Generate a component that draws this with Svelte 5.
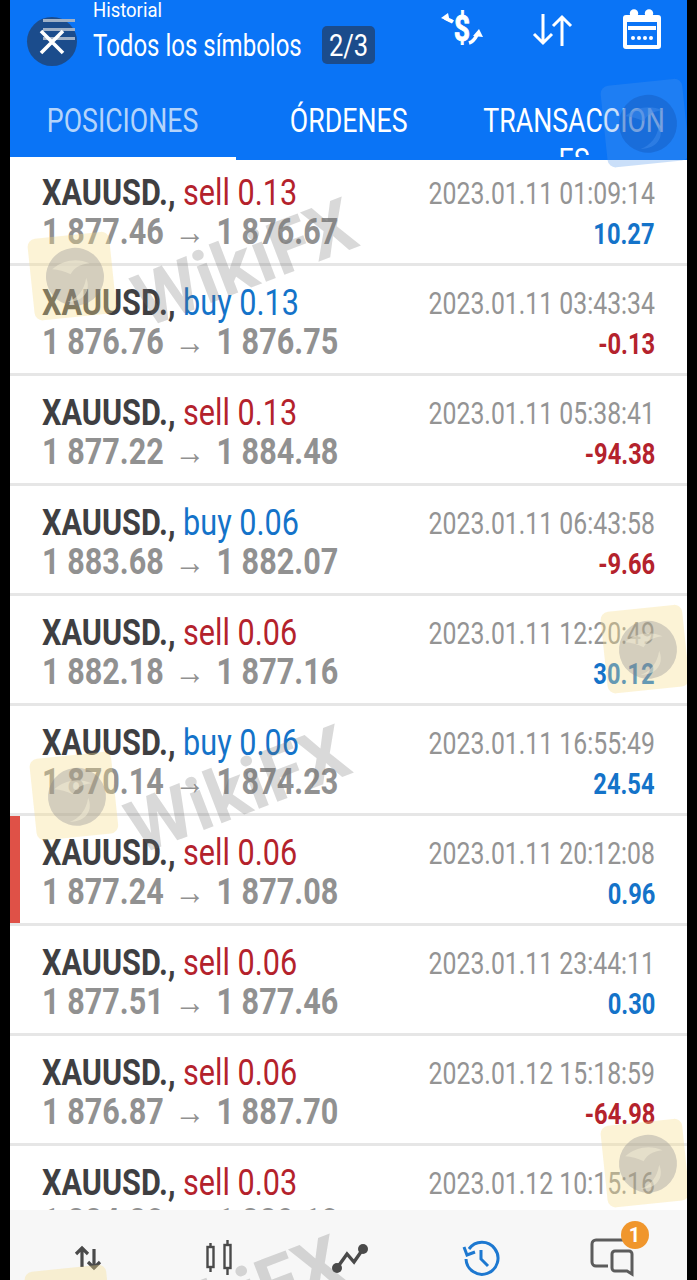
<script>
  const rows = [
    { side: "sell", lot: "0.13", open: "1 877.46", close: "1 876.67", time: "2023.01.11 01:09:14", profit: "10.27" },
    { side: "buy", lot: "0.13", open: "1 876.76", close: "1 876.75", time: "2023.01.11 03:43:34", profit: "-0.13" },
    { side: "sell", lot: "0.13", open: "1 877.22", close: "1 884.48", time: "2023.01.11 05:38:41", profit: "-94.38" },
    { side: "buy", lot: "0.06", open: "1 883.68", close: "1 882.07", time: "2023.01.11 06:43:58", profit: "-9.66" },
    { side: "sell", lot: "0.06", open: "1 882.18", close: "1 877.16", time: "2023.01.11 12:20:49", profit: "30.12" },
    { side: "buy", lot: "0.06", open: "1 870.14", close: "1 874.23", time: "2023.01.11 16:55:49", profit: "24.54" },
    { side: "sell", lot: "0.06", open: "1 877.24", close: "1 877.08", time: "2023.01.11 20:12:08", profit: "0.96", marked: true },
    { side: "sell", lot: "0.06", open: "1 877.51", close: "1 877.46", time: "2023.01.11 23:44:11", profit: "0.30" },
    { side: "sell", lot: "0.06", open: "1 876.87", close: "1 887.70", time: "2023.01.12 15:18:59", profit: "-64.98" },
    { side: "sell", lot: "0.03", open: "1 884.80", close: "1 889.10", time: "2023.01.12 10:15:16", profit: "7.16" }
  ];
  const logos = [
    { x: 31, y: 235 }, { x: 604, y: 82, blue: true }, { x: 604, y: 608 },
    { x: 33, y: 755 }, { x: 604, y: 1122 }, { x: 28, y: 1268 }
  ];
  const marks = [{ x: 146, y: 328 }, { x: 139, y: 855 }, { x: 134, y: 1365 }];
</script>

<div class="screen">
  <header class="top">
    <div class="toolbar">
      <button class="close" type="button" aria-label="Cerrar">
        <span class="lines"></span>
        <svg width="28" height="28" viewBox="0 0 28 28"><path d="M3 3 25 25M25 3 3 25" stroke="#fff" stroke-width="3.6" fill="none"/></svg>
      </button>
      <div class="titles">
        <span class="sub">Historial</span>
        <div class="title-row">
          <span class="title">Todos los símbolos</span>
          <span class="badge"><span>2/3</span></span>
        </div>
      </div>
      <div class="actions">
        <svg width="44" height="40" viewBox="0 0 44 40" fill="none" stroke="#fff">
          <text transform="translate(22 31) scale(.95 1.25)" text-anchor="middle" fill="#fff" stroke="#fff" stroke-width=".7" font-family="Roboto" font-weight="700" font-size="30">$</text>
          <path d="M13 12C10 10 8 10 5 8" stroke-width="3.6"/>
          <path d="M1 8l7-5 2 9z" fill="#fff" stroke="none"/>
          <path d="M29 33c3-1 6-4 8-8" stroke-width="3.6"/>
          <path d="M43 27l-4-8-6 7z" fill="#fff" stroke="none"/>
        </svg>
        <svg width="44" height="36" viewBox="-1 0 44 36" fill="none" stroke="#fff" stroke-width="3">
          <path d="M12 2v29M3 22l9 9 9-9"/>
          <path d="M31 34V5M22 14l9-9 9 9"/>
        </svg>
        <svg width="44" height="42" viewBox="-1 0 44 42">
          <path fill-rule="evenodd" fill="#fff" d="M5 6h32a3 3 0 0 1 3 3v28a3 3 0 0 1-3 3H5a3 3 0 0 1-3-3V9a3 3 0 0 1 3-3zM6 13v23h30V13z"/>
          <circle cx="13" cy="4.500" r="4.200" fill="#fff"/><circle cx="28" cy="4.500" r="4.200" fill="#fff"/>
          <rect x="7" y="17" width="28" height="4" fill="#fff"/>
          <g fill="#fff"><circle cx="12" cy="29" r="2"/><circle cx="18" cy="29" r="2"/><circle cx="24" cy="29" r="2"/><circle cx="30" cy="29" r="2"/></g>
        </svg>
      </div>
    </div>
    <nav class="tabs">
      <div class="tab active"><span>POSICIONES</span></div>
      <div class="tab"><span>ÓRDENES</span></div>
      <div class="tab"><span>TRANSACCION<br />ES</span></div>
    </nav>
  </header>

  <main class="list">
    {#each rows as row}
      <div class="row" class:marked={row.marked}>
        <div class="line">
          <span class="deal"><b>XAUUSD.,</b> <span class={row.side}>{row.side} {row.lot}</span></span>
          <span class="time">{row.time}</span>
        </div>
        <div class="line">
          <span class="prices">{row.open} <i>→</i> {row.close}</span>
          <span class="profit" class:loss={row.profit.startsWith("-")}>{row.profit}</span>
        </div>
      </div>
    {/each}
  </main>

  <footer class="bar">
    <div class="slot">
      <svg width="30" height="28" viewBox="0 0 30 28" fill="none" stroke="#4a4a4a" stroke-width="3.2">
        <path d="M9 23V3M3 10l6-6 6 6"/><path d="M21 5v20M15 18l6 6 6-6"/>
      </svg>
    </div>
    <div class="slot">
      <svg width="30" height="36" viewBox="0 0 30 36" fill="none" stroke="#4a4a4a" stroke-width="2.4">
        <rect x="3.500" y="7" width="6" height="20"/><path d="M6.500 3v4M6.500 27v5"/>
        <rect x="20.500" y="5" width="6" height="23"/><path d="M23.500 0v5M23.500 28v7"/>
      </svg>
    </div>
    <div class="slot">
      <svg width="38" height="32" viewBox="0 0 38 32" fill="none" stroke="#4a4a4a" stroke-width="3.4">
        <path d="M6 26 16 12l7 8L32 7"/>
        <g fill="#4a4a4a" stroke="none"><circle cx="6" cy="26" r="5"/><circle cx="32" cy="7" r="5"/></g>
      </svg>
    </div>
    <div class="slot">
      <svg width="40" height="40" viewBox="0 0 40 40" fill="none" stroke="#1d78d0" stroke-width="3">
        <path d="M8 11A16 16 0 1 1 5 21"/><path d="M3 9l3 8 8-3" /><path d="M20 12v9l7 7"/>
      </svg>
    </div>
    <div class="slot">
      <div class="chat">
        <svg width="44" height="40" viewBox="0 0 44 40" fill="none" stroke="#5c5c5c" stroke-width="3">
          <path d="M33 2H6a4 4 0 0 0-4 4v18a4 4 0 0 0 4 4h12"/>
          <path d="M25 13h14a3 3 0 0 1 3 3v20l-5-3H25a3 3 0 0 1-3-3V16a3 3 0 0 1 3-3z"/>
        </svg>
        <span class="count">1</span>
      </div>
    </div>
  </footer>

  <div class="marks" aria-hidden="true">
    <svg width="697" height="1280" viewBox="0 0 697 1280">
      {#each logos as l}
        <g transform="translate({l.x} {l.y}) rotate(-6 42 42)">
          <rect width="82" height="82" rx="8" fill={l.blue ? "#4f94ea" : "#f7dd8e"} opacity={l.blue ? 0.3 : 0.36} />
          <circle cx="44" cy="42" r="29" fill={l.blue ? "#1559bd" : "#80808a"} opacity={l.blue ? 0.45 : 0.32} />
          <path d="M22 32c12-8 26-9 38-2-10 0-16 3-20 9-6-4-12-6-18-7zM34 66c10-2 18-10 21-22 4 12-4 24-21 22z" fill={l.blue ? "#3f8cec" : "#f6efd8"} opacity="0.5" />
        </g>
      {/each}
      {#each marks as m}
        <text class="wiki" x={m.x} y={m.y} transform="rotate(-21 {m.x} {m.y})">WikiFX</text>
      {/each}
    </svg>
  </div>
</div>

<style>
  :global(body) {
    background: #000;
  }

  .screen {
    position: relative;
    width: 677px;
    height: 1280px;
    margin-left: 10px;
    overflow: hidden;
    background: #fff;
    font-family: Roboto, "Liberation Sans", sans-serif;
  }

  .top {
    position: relative;
    z-index: 1;
    height: 160px;
    background: #0a74f6;
    color: #fff;
  }

  .toolbar {
    display: flex;
    height: 80px;
    padding-left: 17px;
  }

  .close {
    position: relative;
    display: flex;
    align-items: center;
    justify-content: center;
    width: 50px;
    height: 49px;
    margin-top: 17px;
    padding: 0;
    border: 0;
    border-radius: 50%;
    background: #1b4c8c;
  }

  .lines {
    position: absolute;
    left: 16px;
    top: 2px;
    width: 32px;
    height: 21px;
    background: repeating-linear-gradient(#9fb0c6 0 3px, transparent 3px 9px);
  }

  .close svg {
    position: relative;
  }

  .titles {
    display: flex;
    flex-direction: column;
    width: 290px;
    margin-left: 16px;
  }

  .sub {
    height: 21px;
    font-size: 21px;
    line-height: 21px;
    transform: scaleX(0.88);
    transform-origin: left;
  }

  .title-row {
    display: flex;
    align-items: center;
    margin-top: 5px;
  }

  .title {
    width: 229px;
    font-size: 32px;
    line-height: 38px;
    white-space: nowrap;
    transform: scaleX(0.75);
    transform-origin: left;
  }

  .badge {
    display: flex;
    justify-content: center;
    width: 53px;
    height: 38px;
    border-radius: 5px;
    background: #1b4c8c;
    font-size: 32px;
    line-height: 38px;
  }

  .badge span {
    transform: scaleX(0.8);
  }

  .actions {
    display: flex;
    align-items: center;
    gap: 46px;
    margin-left: 57px;
    height: 60px;
  }

  .actions svg {
    flex: 0 0 auto;
  }

  .tabs {
    display: flex;
    height: 80px;
    overflow: hidden;
  }

  .tab {
    flex: 1;
    padding-top: 21px;
    border-bottom: 3px solid transparent;
    box-sizing: border-box;
    height: 80px;
    overflow: hidden;
    font-size: 33px;
    line-height: 40px;
    text-align: center;
    white-space: nowrap;
  }

  .tab span {
    display: inline-block;
    transform: scaleX(0.81);
  }

  .tab.active {
    border-bottom-color: #fff;
    color: #b4d4fb;
  }

  .list {
    height: 1050px;
    overflow: hidden;
    background: #fff;
  }

  .row {
    position: relative;
    box-sizing: border-box;
    height: 110px;
    padding: 16px 32px 0;
    border-bottom: 3px solid #e6e6e6;
  }

  .row:first-child {
    margin-top: -4px;
  }

  .row.marked::before {
    content: "";
    position: absolute;
    left: 0;
    top: 0;
    bottom: 0;
    width: 10px;
    background: #df5147;
  }

  .line {
    display: flex;
    justify-content: space-between;
    align-items: center;
    height: 40px;
  }

  .deal,
  .prices {
    line-height: 40px;
    white-space: nowrap;
    transform-origin: left;
  }

  .deal {
    margin-top: 2px;
    font-size: 37px;
    transform: scaleX(0.827);
  }

  .deal b {
    color: #3f3f42;
  }

  .sell {
    color: #b4222c;
  }

  .buy {
    color: #1473c9;
  }

  .prices {
    color: #919191;
    font-size: 36px;
    font-weight: 700;
    transform: scaleX(0.85);
  }

  .prices i {
    margin: 0 4px;
    font-style: normal;
    font-weight: 400;
  }

  .time {
    margin-top: 4px;
    color: #949494;
    font-size: 31px;
    line-height: 40px;
    white-space: nowrap;
    transform: scaleX(0.8);
    transform-origin: right;
  }

  .profit {
    margin-top: 3px;
    color: #1473c9;
    font-size: 30px;
    font-weight: 700;
    line-height: 40px;
    transform: scaleX(0.79);
    transform-origin: right;
  }

  .profit.loss {
    color: #b4222c;
  }

  .bar {
    display: flex;
    align-items: center;
    box-sizing: border-box;
    height: 70px;
    padding: 26px 0 0 12px;
    background: #f7f7f7;
  }

  .slot {
    display: flex;
    flex: 0 0 131px;
    justify-content: center;
  }

  .chat {
    position: relative;
    display: flex;
  }

  .count {
    position: absolute;
    right: -15px;
    top: -17px;
    width: 28px;
    height: 28px;
    border-radius: 50%;
    background: #f0962c;
    color: #fff;
    font-size: 20px;
    font-weight: 700;
    line-height: 28px;
    text-align: center;
  }

  .marks {
    position: absolute;
    z-index: 2;
    left: -10px;
    top: 0;
    pointer-events: none;
  }

  .wiki {
    fill: #6e6e6e;
    fill-opacity: 0.26;
    font-family: Roboto, sans-serif;
    font-size: 74px;
    font-weight: 700;
  }
</style>
